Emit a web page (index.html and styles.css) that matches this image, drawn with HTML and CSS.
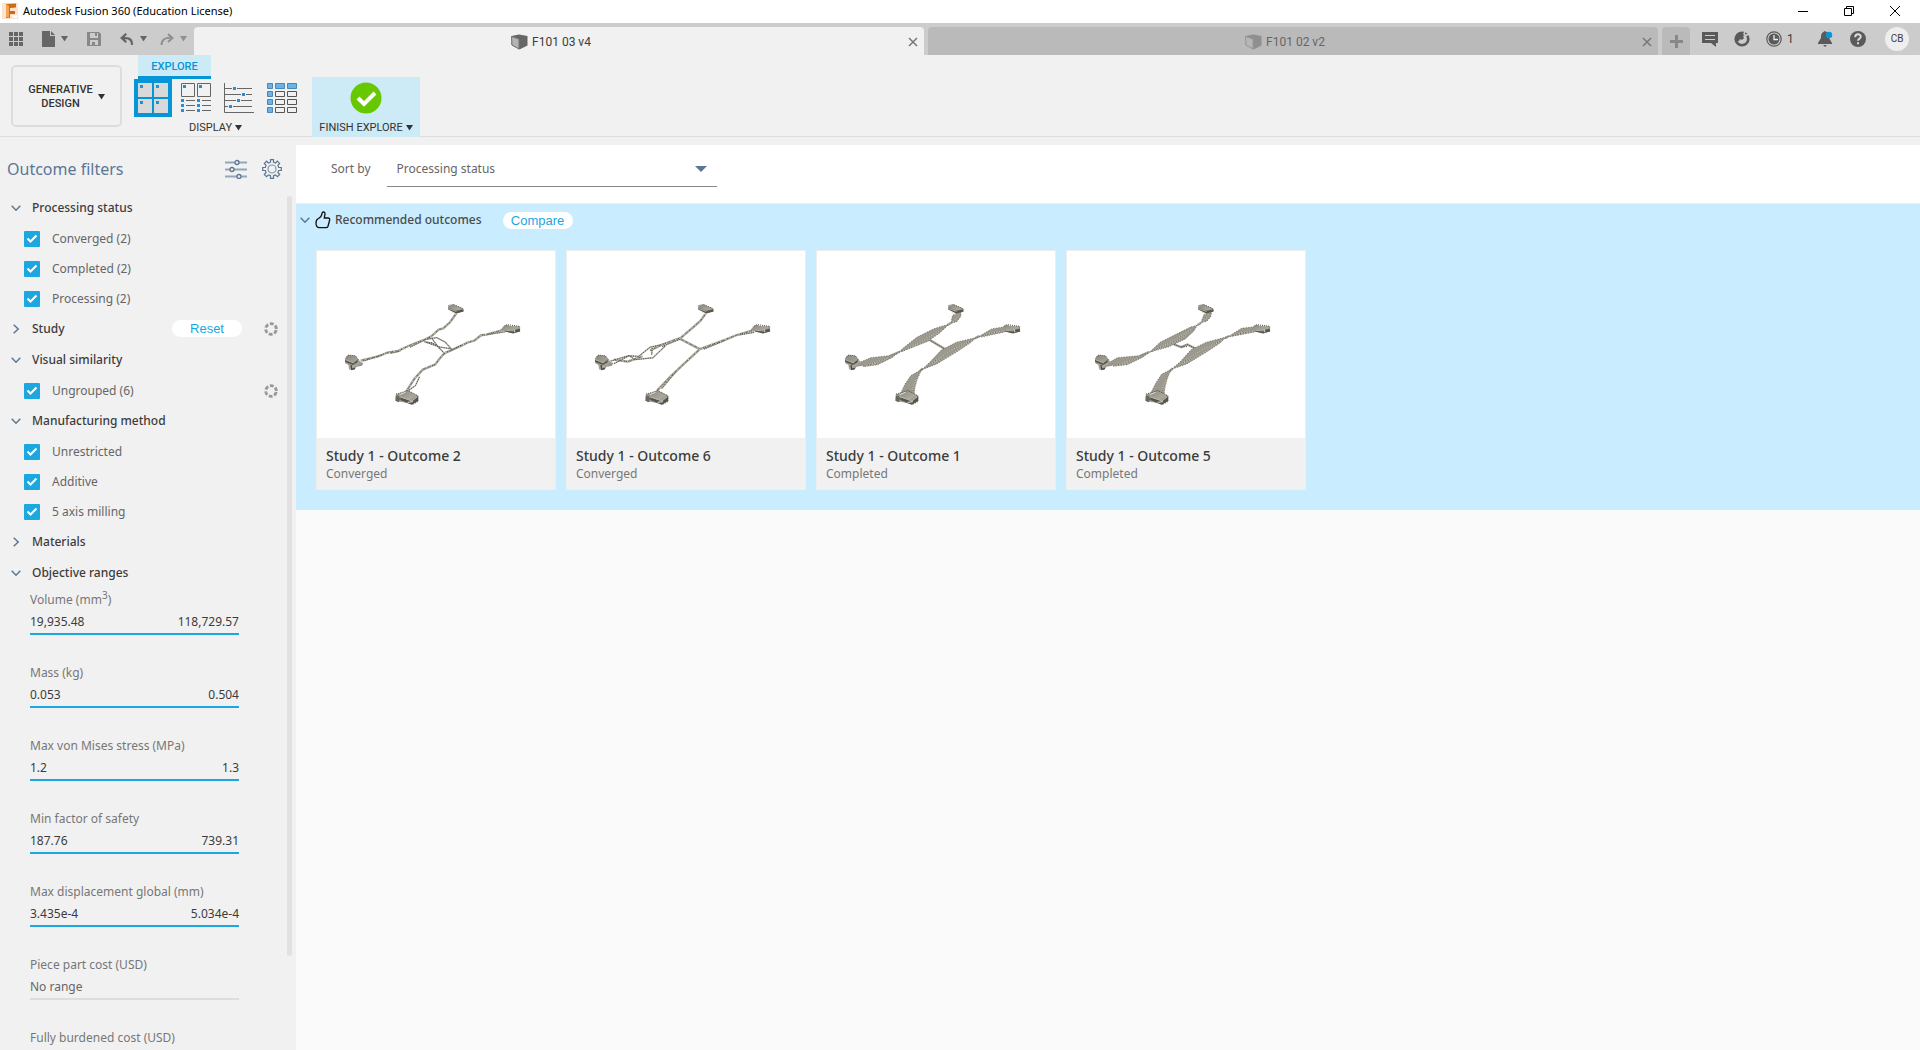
FILE: index.html
```html
<!DOCTYPE html>
<html lang="en">
<head>
<meta charset="utf-8">
<title>Autodesk Fusion 360 (Education License)</title>
<link rel="stylesheet" href="styles.css">
</head>
<body>
<svg class="defs" aria-hidden="true">
  <defs>
    <linearGradient id="metal" x1="0" y1="0" x2="1" y2="1">
      <stop offset="0" stop-color="#88857c"/><stop offset=".6" stop-color="#aaa79d"/><stop offset="1" stop-color="#77746b"/>
    </linearGradient>
    <symbol id="caret" viewBox="0 0 7 6"><path d="M0 0h7L3.500 5.500z" fill="currentColor"/></symbol>
    <symbol id="cross" viewBox="0 0 10 10"><path d="M1 1l8 8M9 1L1 9" fill="none" stroke="currentColor" stroke-width="1.500"/></symbol>
    <symbol id="chevron" viewBox="0 0 10 10"><path d="M.7 2.700L5 7.200l4.300-4.500" fill="none" stroke="#5c7694" stroke-width="1.500"/></symbol>
    <symbol id="cube" viewBox="0 0 17 16">
      <path d="M.5 2L8 .5 16.500 2v9.500L8.500 15.500.5 11z" fill="#666"/>
      <path d="M.5 2.500L8 5v10L1 11z" fill="#b4b4b4"/><path d="M.5 2.500L8 5v10L1 11z" fill="none" stroke="#777"/>
    </symbol>
    <symbol id="spinner" viewBox="0 0 14 14"><circle cx="7" cy="7" r="5.300" fill="none" stroke="#999" stroke-width="2.800" stroke-dasharray="3.800 1.750" stroke-dashoffset="-1"/></symbol>
    <symbol id="pads" viewBox="18 30 720 564">
      <g fill="url(#metal)">
        <path d="M415 196l16-5 30 13v8l-18 5-8-9-20-6z"/>
        <path d="M583 256l9-4 10 4 28 1 2 16-20 5-29-6-10-4z"/>
        <path d="M103 356l9-12 22 2 14 18 10 4-4 8-16 3-8 10-15-1-2-14-10-6z"/>
        <path d="M256 463l18-5 18-7 32 16v16l-18 10-28-6-12-2-8-2z"/>
      </g>
      <path d="M256 468l-1 14 10 5 5-12-6-8z" fill="#6a675e"/>
      <path d="M270 472v8l34 14 20-12v-14l-18 15zM103 357v7l24 10 14-8v-8l-12 10zM415 200v6l24 12 22-6v-6l-20 4zM587 268v5l24 6 20-6v-9l-18 5z" fill="#57544c"/>
      <path d="M270 470l35 13 18-14M104 358l25 10M416 203l24 9M588 269l25 2" fill="none" stroke="#b9b6ac" stroke-width="3"/>
      <path d="M121 374l2 13 10-3" fill="none" stroke="#4b4942" stroke-width="4"/>
      <path d="M292 487l16-2M614 267l3 8M268 464l18-8M426 214l12 6" fill="none" stroke="#e6e3da" stroke-width="3"/>
      <g fill="none" stroke="#4b4942" stroke-width="3" stroke-dasharray="3 3">
        <path d="M416 194l15-3 30 13M585 256l8-4 38 5v16M104 354l8-10 22 2 13 17M257 462l18-5 18-6 30 16v18l-18 9"/>
      </g>
    </symbol>
    <path id="beam-1" d="M440 217l-10 14-10 14-20 18-14 4-22 20-24 12-42 16-34 16-34 6-30 12-50 12M588 266l-58 16-16 2-20 16-20 6-24 12-46 20-16 18-12 16-38 16-24 26-26 40"/>
    <path id="beam-1b" d="M352 296l28-5 26 14 18 20-38-6-20-12-22-3 40 14 22 24M366 294l22 30M300 320l60-30M420 332l34-18M212 344l-54 18M586 274l-54 8M328 410l-12 26-28 20M242 338l28-6"/>
    <path id="beam-2" d="M438 218l-16 22-20 18-40 34-56 20-36 18M246 348l-44 16-42-6M584 268l-54 16-34 14-76 28-62-32M420 326l-50 46-40 38-40 42"/>
    <path id="beam-2b" d="M150 362l54-16 30 2 36-28 36-8M160 370l46-24 18 12 54-6 38-36M276 322l-2 22M584 275l-44 8M348 394l-44 52M360 296l-54 22M494 300l-62 26"/>
    <path id="blade-a" d="M454 209l-26 15-5 24 18-5 12-16zM414 252l-16 4-28 9-50 25-40 32-16 14 90-34 34-24 22-20zM262 338l-28 8-54 6-30 13 8 14 44-6 44-22zM586 258l-40 7-44 26 20-3 64-14zM500 291l-60 14-46 24-34 36-26 24 46-18 60-36 42-28zM334 388l-32 18-18 26-12 26 40 2 4-30z"/>
    <path id="blade-b" d="M456 211l-24 11-9 24 18-4 12-14zM412 254l-20 5-52 26-40 20-32 30 58-16 50-24 26-24zM264 338l-30 8-64 6-22 13 10 13 42-5 46-22zM586 258l-40 5-42 26 20-3 62-12zM500 289l-60 16-46 22-34 38-26 22 46-16 60-36 42-28zM332 388l-28 14-18 28-14 28 40 2 4-30z"/>
    <path id="ridge" d="M398 266l-60 34-66 34 80-32 38-30M490 298l-64 30-70 46 66-30 58-42M324 400l-22 56 14-20 6-34M584 270l-68 16 50-14M236 352l-66 22 42-6M450 218l-20 26"/>
    <path id="necks" d="M424 246l-12 8M268 334l-28 12M508 286l-12 8M338 384l-10 10"/>
  </defs>
</svg>

<header class="titlebar">
  <svg class="app-logo" viewBox="0 0 16 16"><path d="M0 0h16v16H0z" fill="#fbe3cd"/><path d="M4 1l10-.5v4l-6 .5v3h5v3H8v4H4z" fill="#cf6a13"/><path d="M4 1l3 2v12l-3-1z" fill="#f4a555"/><path d="M10 12h5v3h-4z" fill="#fff"/></svg>
  <span class="app-name">Autodesk Fusion 360 (Education License)</span>
  <div class="window-controls">
    <button aria-label="Minimize"><svg viewBox="0 0 12 12"><path d="M1 6.500h10" stroke="#000"/></svg></button>
    <button aria-label="Restore"><svg viewBox="0 0 12 12"><path d="M1.500 3.500h7v7h-7zM3.500 3.500v-2h7v7h-2" fill="none" stroke="#000"/></svg></button>
    <button aria-label="Close"><svg viewBox="0 0 12 12"><path d="M1 1l10 10M11 1L1 11" stroke="#000"/></svg></button>
  </div>
</header>

<nav class="tabbar">
  <div class="quick-tools">
    <button aria-label="Data panel"><svg width="14" height="14"><path d="M0 0h4v4H0zM5 0h4v4H5zM10 0h4v4h-4zM0 5h4v4H0zM5 5h4v4H5zM10 5h4v4h-4zM0 10h4v4H0zM5 10h4v4H5zM10 10h4v4h-4z" fill="#666"/></svg></button>
    <button aria-label="File"><svg width="13" height="16"><path d="M0 0h8v5h5v11H0zM9 0l4 4H9z" fill="#666"/></svg><svg class="caret"><use href="#caret"/></svg></button>
    <button aria-label="Save"><svg width="14" height="14"><path d="M0 0h12l2 2v12H0z" fill="#888"/><path d="M3 1h8v5H3zM3 8h8v5H3z" fill="#ccc"/><path d="M8 1h2v3H8zM5 10h3v3H5z" fill="#888"/></svg></button>
    <div class="history">
      <button aria-label="Undo"><svg width="14" height="12"><path d="M5.500 0L7 1.500 4.600 4C10.500 3.500 13.500 6.500 13 12h-2c0-4-2-6-6.200-5.800L7 8.500 5.500 10 0 5z" fill="#666"/></svg><svg class="caret"><use href="#caret"/></svg></button>
      <button aria-label="Redo" class="faded"><svg width="14" height="12"><path d="M8 1l4.500 4L8 9M12 5C5 4 1.500 7 1.500 12" fill="none" stroke="#909090" stroke-width="2"/></svg><svg class="caret"><use href="#caret"/></svg></button>
    </div>
  </div>
  <div class="tab active"><button class="tab-name"><svg class="cube"><use href="#cube"/></svg>F101 03 v4</button><button class="tab-close" aria-label="Close F101 03 v4"><svg><use href="#cross"/></svg></button></div>
  <div class="tab"><button class="tab-name"><svg class="cube"><use href="#cube"/></svg>F101 02 v2</button><button class="tab-close" aria-label="Close F101 02 v2"><svg><use href="#cross"/></svg></button></div>
  <button class="tab-add" aria-label="New tab"><svg width="13" height="13"><path d="M5 0h3v5h5v3H8v5H5V8H0V5h5z" fill="#888"/></svg></button>
  <div class="account">
    <button aria-label="Comments"><svg width="16" height="16"><path d="M0 1h16v11h-2v4l-5-4H0z" fill="#5a5a5a"/><path d="M3 4.500h10M3 8.500h10" stroke="#ccc"/></svg></button>
    <button aria-label="Extensions"><svg width="16" height="16"><circle cx="8" cy="8" r="6.300" fill="none" stroke="#5a5a5a" stroke-width="2.600"/><path d="M3 3l3-2 4 .5 1 2.500-2 1 1 2-2 2-2-1-1 2-3 1z" fill="#5a5a5a"/><path d="M11 0l-1 3 2 1.500L14.500 3" fill="none" stroke="#ccc" stroke-width="1.500"/></svg></button>
    <button class="jobs" aria-label="Job status"><svg width="16" height="16"><circle cx="8" cy="8" r="7.200" fill="none" stroke="#5a5a5a" stroke-width="1.200"/><circle cx="8" cy="8" r="5.500" fill="#5a5a5a"/><path d="M8 4v4.500h4" fill="none" stroke="#eee" stroke-width="1.300"/></svg><span>1</span></button>
    <button class="bell" aria-label="Notifications"><svg width="16" height="16"><path d="M7 0c4 2 4 4 4 7l3 5v1H0v-1l3-5c0-3 0-5 4-7zM5 14h4l-2 2z" fill="#5a5a5a"/><circle cx="11" cy="4" r="3.200" fill="#0696d7"/></svg></button>
    <button aria-label="Help"><svg width="16" height="16"><circle cx="8" cy="8" r="8" fill="#5a5a5a"/><path d="M5.200 6.200c0-4 5.800-3.700 5.600-.4C10.700 7.600 8 7.700 8 9.800M8 11.300v2" fill="none" stroke="#ddd" stroke-width="1.900"/></svg></button>
    <button class="avatar">CB</button>
  </div>
</nav>

<section class="ribbon">
  <button class="workspace"><span>GENERATIVE<br>DESIGN</span><svg class="caret"><use href="#caret"/></svg></button>
  <div class="display-group">
    <button class="ribbon-tab">EXPLORE</button>
    <div class="views">
      <button class="view selected" aria-label="Thumbnail view"><svg viewBox="0 0 114 114"><path d="M0 0h114v114H0z" fill="#0696d7"/><path d="M12 12h42v42H12zM60 12h42v42H60zM12 60h42v42H12zM60 60h42v42H60z" fill="#d9d9d9"/><path d="M18 18h9v9h-9zM66 18h9v9h-9zM18 66h9v9h-9zM66 66h9v9h-9z" fill="#1e90e0"/></svg></button>
      <button class="view" aria-label="Properties view"><svg viewBox="0 0 90 90"><path d="M1.500 1.500h39v39h-39zM49.500 1.500h39v39h-39z" fill="none" stroke="#666" stroke-width="3"/><path d="M6 6h9v9H6zM54 6h9v9h-9zM0 48h9v9H0zM48 48h9v9h-9zM0 63h9v9H0zM48 63h9v9h-9zM0 78h9v9H0zM48 78h9v9h-9z" fill="#1e90e0"/><path d="M15 52.500h27M63 52.500h27M15 67.500h27M63 67.500h27M15 82.500h27M63 82.500h27" stroke="#666" stroke-width="3"/></svg></button>
      <button class="view" aria-label="Scatter plot view"><svg viewBox="0 0 90 90"><path d="M1.500 0v88.500H90M3 16.500h81M3 34.500h81M3 52.500h81M3 70.500h81" fill="none" stroke="#666" stroke-width="3"/><path d="M24 10h15v13H24zM51 28h15v13H51zM36 46h15v13H36zM12 64h15v13H12z" fill="#f1f1f1"/><path d="M27 12h9v9h-9zM54 30h9v9h-9zM39 48h9v9h-9zM15 66h9v9h-9z" fill="#1e90e0"/></svg></button>
      <button class="view" aria-label="Table view"><svg viewBox="0 0 90 90"><path d="M1.500 1.500h15v15h-15zM25.500 1.500h27v15h-27zM61.500 1.500h27v15h-27zM1.500 25.500h15v15h-15zM1.500 49.500h15v15h-15zM1.500 73.500h15v15h-15z" fill="#69b3e7" stroke="#4a86b8" stroke-width="3"/><path d="M25.500 25.500h27v15h-27zM61.500 25.500h27v15h-27zM25.500 49.500h27v15h-27zM61.500 49.500h27v15h-27zM25.500 73.500h27v15h-27zM61.500 73.500h27v15h-27z" fill="none" stroke="#555" stroke-width="3"/></svg></button>
    </div>
    <button class="ribbon-label">DISPLAY<svg class="caret"><use href="#caret"/></svg></button>
  </div>
  <button class="finish">
    <svg class="finish-icon" viewBox="0 0 32 32"><circle cx="16" cy="16" r="15.500" fill="#67c800"/><path d="M8 16l6 6L25 11" fill="none" stroke="#fff" stroke-width="4"/></svg>
    <span class="ribbon-label">FINISH EXPLORE<svg class="caret"><use href="#caret"/></svg></span>
  </button>
</section>

<div class="workarea">
  <aside class="sidebar">
    <div class="filters-header">
      <h1>Outcome filters</h1>
      <button aria-label="Filter options"><svg width="22" height="20"><path d="M0 3.500h22M0 10.500h22M0 17.500h22" stroke="#93a7ba" stroke-width="2"/><g fill="#f1f1f1" stroke="#5c7694" stroke-width="1.300"><circle cx="12" cy="3.500" r="2"/><circle cx="7" cy="10.500" r="2"/><circle cx="14" cy="17.500" r="2"/></g></svg></button>
      <button aria-label="Settings"><svg width="20" height="20" viewBox="0 0 20 20"><path d="M8.500.7h3v2.500l2 .8 1.800-1.800 2.300 2.300L15.900 6.400l.8 2.100h2.600v3h-2.600l-.8 2 1.800 1.900-2.300 2.300-1.900-1.800-2 .8v2.600h-3v-2.600l-2-.8-1.900 1.800-2.300-2.300 1.800-1.900-.8-2H.7v-3h2.600l.8-2.100L2.300 4.500l2.300-2.300L6.500 4l2-.8z" fill="none" stroke="#5c7694" stroke-width="1.200"/><circle cx="10" cy="10" r="4" fill="none" stroke="#8296aa" stroke-width="1.200"/></svg></button>
    </div>
    <div class="filters-body">
      <div class="filters">
        <h2><svg class="chevron"><use href="#chevron"/></svg>Processing status</h2>
        <label class="option"><input type="checkbox" checked>Converged (2)</label>
        <label class="option"><input type="checkbox" checked>Completed (2)</label>
        <label class="option"><input type="checkbox" checked>Processing (2)</label>
        <h2><svg class="chevron closed"><use href="#chevron"/></svg>Study<button class="pill">Reset</button><svg class="spinner"><use href="#spinner"/></svg></h2>
        <h2><svg class="chevron"><use href="#chevron"/></svg>Visual similarity</h2>
        <label class="option"><input type="checkbox" checked>Ungrouped (6)<svg class="spinner"><use href="#spinner"/></svg></label>
        <h2><svg class="chevron"><use href="#chevron"/></svg>Manufacturing method</h2>
        <label class="option"><input type="checkbox" checked>Unrestricted</label>
        <label class="option"><input type="checkbox" checked>Additive</label>
        <label class="option"><input type="checkbox" checked>5 axis milling</label>
        <h2><svg class="chevron closed"><use href="#chevron"/></svg>Materials</h2>
        <h2><svg class="chevron"><use href="#chevron"/></svg>Objective ranges</h2>
        <div class="range"><h3>Volume (mm<sup>3</sup>)</h3><p><span>19,935.48</span><span>118,729.57</span></p></div>
        <div class="range"><h3>Mass (kg)</h3><p><span>0.053</span><span>0.504</span></p></div>
        <div class="range"><h3>Max von Mises stress (MPa)</h3><p><span>1.2</span><span>1.3</span></p></div>
        <div class="range"><h3>Min factor of safety</h3><p><span>187.76</span><span>739.31</span></p></div>
        <div class="range"><h3>Max displacement global (mm)</h3><p><span>3.435e-4</span><span>5.034e-4</span></p></div>
        <div class="range none"><h3>Piece part cost (USD)</h3><p><span>No range</span></p></div>
        <div class="range none"><h3>Fully burdened cost (USD)</h3></div>
      </div>
      <div class="scroll-thumb"></div>
    </div>
  </aside>

  <main class="results">
    <div class="sortbar">
      <label for="sort">Sort by</label>
      <select id="sort"><option>Processing status</option><option>Volume</option><option>Mass</option></select>
    </div>
    <section class="recommended">
      <div class="group-header">
        <svg class="chevron"><use href="#chevron"/></svg>
        <svg class="thumb-up" viewBox="0 0 16 18"><path d="M8.500 1c1 0 1.800.8 1.500 2L9.300 7H13c1.500 0 2 1 1.600 2.300L13 15.200c-.3 1-1 1.500-2.200 1.500H4.500C2 16.700 1 14.500 1 12s.8-3.800 2.500-4.500C5.500 6.500 6.800 4.500 7 2.500 7.100 1.500 7.600 1 8.500 1z" fill="none" stroke="#111" stroke-width="1.300"/></svg>
        <h2>Recommended outcomes</h2>
        <button class="pill">Compare</button>
      </div>
      <div class="cards">
        <article class="card">
          <svg class="model" viewBox="18 30 720 564"><use class="strut" href="#beam-1"/><use class="strand" href="#beam-1b"/><use class="dark" href="#beam-1"/><use class="light" href="#beam-1"/><use class="dark" href="#beam-1b"/><use href="#pads" x="18" y="30" width="720" height="564"/></svg>
          <div class="caption"><h3>Study 1 - Outcome 2</h3><p>Converged</p></div>
        </article>
        <article class="card">
          <svg class="model" viewBox="18 30 720 564"><use class="strut" href="#beam-2"/><use class="strand" href="#beam-2b"/><use class="dark" href="#beam-2"/><use class="light" href="#beam-2"/><use class="dark" href="#beam-2b"/><use href="#pads" x="18" y="30" width="720" height="564"/></svg>
          <div class="caption"><h3>Study 1 - Outcome 6</h3><p>Converged</p></div>
        </article>
        <article class="card">
          <svg class="model" viewBox="18 30 720 564"><path class="strut" d="M358 298l48 28"/><path class="dark" d="M358 298l48 28"/><use class="strut" href="#necks"/><use class="blade" href="#blade-a"/><use class="edge" href="#blade-a"/><use class="shine" href="#ridge"/><use class="edge" href="#ridge"/><use href="#pads" x="18" y="30" width="720" height="564"/></svg>
          <div class="caption"><h3>Study 1 - Outcome 1</h3><p>Completed</p></div>
        </article>
        <article class="card">
          <svg class="model" viewBox="18 30 720 564"><path class="strut" d="M342 312l22 8 18-8 28 14"/><path class="dark" d="M342 312l22 8 18-8 28 14M364 320l20-2"/><use class="strut" href="#necks"/><use class="blade" href="#blade-b"/><use class="edge" href="#blade-b"/><use class="shine" href="#ridge"/><use class="edge" href="#ridge"/><use href="#pads" x="18" y="30" width="720" height="564"/></svg>
          <div class="caption"><h3>Study 1 - Outcome 5</h3><p>Completed</p></div>
        </article>
      </div>
    </section>
  </main>
</div>
</body>
</html>
```
FILE: styles.css
```css
* { box-sizing: border-box; }
body {
  margin: 0;
  height: 100vh;
  display: flex;
  flex-direction: column;
  overflow: hidden;
  background: #f1f1f1;
  color: #3c3c3c;
  font: 12px/20px "Noto Sans", sans-serif;
}
h1, h2, h3, p { margin: 0; font-weight: 400; }
svg { display: block; flex: none; }
button {
  display: flex;
  align-items: center;
  padding: 0;
  border: 0;
  background: none;
  color: inherit;
  font: inherit;
}
.defs { position: absolute; width: 0; height: 0; }
.caret { width: 7px; height: 6px; }

/* Title bar */
.titlebar {
  display: flex;
  align-items: center;
  height: 23px;
  padding: 0 19px 1px 2px;
  background: #fff;
  color: #000;
  font: 11px/20px "Noto Sans", sans-serif;
}
.app-logo { width: 16px; height: 16px; margin-right: 5px; }
.window-controls { display: flex; gap: 34px; margin-left: auto; }
.window-controls svg { width: 12px; height: 12px; }

/* Document tabs */
.tabbar {
  display: flex;
  gap: 4px;
  height: 32px;
  padding-top: 4px;
  background: #ccc;
  font: 12px/20px Roboto, sans-serif;
}
.quick-tools {
  display: flex;
  align-items: center;
  gap: 19px;
  width: 190px;
  padding: 0 0 4px 9px;
  color: #666;
}
.quick-tools button { gap: 6px; }
.history { display: flex; gap: 13px; }
.faded { color: #909090; }
.tab {
  flex: 1;
  display: flex;
  background: #bababa;
  border-radius: 4px 4px 0 0;
  padding: 1px 6px 0 0;
  color: #666;
}
.tab.active { background: #f1f1f1; color: #3c3c3c; }
.tab-name { flex: 1; justify-content: center; gap: 4px; }
.cube { width: 17px; height: 16px; }
.tab:not(.active) .cube { opacity: .5; }
.tab-close svg { width: 10px; height: 10px; color: #777; }
.tab-add {
  justify-content: center;
  width: 28px;
  background: #bababa;
  border-radius: 4px 4px 0 0;
}
.account {
  display: flex;
  align-items: center;
  gap: 16px;
  width: 226px;
  padding: 0 11px 4px 8px;
}
.jobs { gap: 5px; margin-right: 8px; }
.avatar {
  justify-content: center;
  width: 24px;
  height: 24px;
  margin-left: auto;
  border-radius: 50%;
  background: #eee;
  font-size: 10px;
}

/* Ribbon */
.ribbon {
  display: flex;
  height: 82px;
  padding-left: 11px;
  border-bottom: 1px solid #ddd;
  color: #333;
  font: 11px/14px Roboto, sans-serif;
}
.workspace {
  justify-content: center;
  gap: 5px;
  width: 111px;
  height: 62px;
  margin: 10px 12px 0 0;
  padding-top: 2px;
  border: 2px solid #ddd;
  border-radius: 5px;
  font-weight: 500;
  text-align: center;
}
.display-group { width: 163px; margin-right: 15px; }
.ribbon-tab {
  justify-content: center;
  width: 73px;
  height: 24px;
  margin-left: 4px;
  padding-top: 2px;
  background: #cdeaf7;
  border-bottom: 3px solid #0696d7;
  color: #0696d7;
  font-weight: 500;
}
.views {
  display: flex;
  align-items: center;
  justify-content: space-between;
}
.view svg { width: 30px; height: 30px; }
.view.selected { margin-right: -4px; }
.view.selected svg { width: 38px; height: 38px; }
.ribbon-label {
  display: flex;
  align-items: center;
  justify-content: center;
  gap: 3px;
  width: 100%;
}
.display-group .ribbon-label { height: 22px; }
.finish {
  flex-direction: column;
  width: 108px;
  height: 60px;
  margin-top: 22px;
  padding-top: 5px;
  background: #cdeaf7;
}
.finish-icon { width: 32px; height: 32px; }
.finish .ribbon-label { height: 20px; margin-top: 4px; }

/* Filters */
.workarea { flex: 1; display: flex; min-height: 0; }
.sidebar {
  display: flex;
  flex-direction: column;
  width: 296px;
  padding-right: 4px;
}
.filters-header {
  display: flex;
  align-items: center;
  gap: 15px;
  height: 59px;
  padding: 5px 10px 0 7px;
}
.filters-header h1 {
  flex: 1;
  color: #5c7694;
  font-size: 16px;
}
.filters-body { flex: 1; display: flex; min-height: 0; }
.filters {
  flex: 1;
  min-width: 0;
  overflow: hidden;
  padding: 0 9px 0 11px;
  margin-top: -4px;
}
.scroll-thumb {
  width: 5px;
  height: 89%;
  border-radius: 3px;
  background: #e1e1e1;
}
.filters h2 {
  display: flex;
  align-items: center;
  height: 31px;
  font-size: 12px;
  font-weight: 500;
}
.chevron { width: 10px; height: 10px; }
.chevron.closed { transform: rotate(-90deg); }
.filters .chevron { margin-right: 11px; }
.option {
  display: flex;
  align-items: center;
  height: 30px;
  padding: 1px 0 0 13px;
  color: #666;
}
.option input {
  appearance: none;
  width: 16px;
  height: 16px;
  margin: 0 12px 0 0;
  border-radius: 1px;
  background: #1ca7e0 url("data:image/svg+xml,%3Csvg xmlns='http://www.w3.org/2000/svg' viewBox='0 0 16 16'%3E%3Cpath d='M3.500 7.500l3 3 6-6' fill='none' stroke='white' stroke-width='2'/%3E%3C/svg%3E");
}
.spinner { width: 14px; height: 14px; margin-left: auto; }
.pill {
  justify-content: center;
  width: 70px;
  height: 17px;
  border-radius: 9px;
  background: #fff;
  color: #1ca7e0;
  font: 13px/17px "Liberation Sans", sans-serif;
}
.filters .pill { margin-left: auto; }
.filters .pill + .spinner { margin-left: 22px; }
.range { width: 209px; margin: 0 0 26px 19px; }
.range h3 { height: 24px; color: #777; font-size: 12px; line-height: 24px; }
.range sup { font-size: 10px; line-height: 0; }
.range p {
  display: flex;
  justify-content: space-between;
  height: 23px;
  border-bottom: 2px solid #1ca7e0;
}
.range.none p { border-color: #ddd; color: #666; }

/* Results */
.results { flex: 1; min-width: 0; padding-top: 8px; background: linear-gradient(#f1f1f1 8px, #fafafa 8px); }
.sortbar {
  display: flex;
  align-items: center;
  gap: 16px;
  height: 59px;
  padding: 0 35px 10px;
  background: #fff;
  border-bottom: 1px solid #eee;
  color: #666;
}
.sortbar select {
  appearance: none;
  width: 330px;
  height: 35px;
  padding: 0 10px;
  border: 0;
  border-bottom: 1px solid #888;
  border-radius: 0;
  background: url("data:image/svg+xml,%3Csvg xmlns='http://www.w3.org/2000/svg' width='12' height='6'%3E%3Cpath d='M0 0h12L6 6z' fill='%235c7694'/%3E%3C/svg%3E") no-repeat right 10px center;
  color: #666;
  font: inherit;
}
.recommended { padding-bottom: 20px; background: #c9ecff; }
.group-header {
  display: flex;
  align-items: center;
  height: 32px;
  padding-left: 4px;
}
.thumb-up { width: 16px; height: 18px; margin: 0 4px 0 5px; }
.group-header h2 { color: #4a4a4a; font-size: 12px; font-weight: 500; }
.group-header .pill { margin-left: 21px; }
.cards { display: flex; flex-wrap: wrap; gap: 10px; padding: 14px 20px 0; }
.card { width: 240px; background: #fff; border: 1px solid #eee; }
.model { width: 100%; height: 187px; }
.caption { height: 51px; padding: 8px 9px; background: #f1f1f1; }
.caption h3 { font-size: 14px; font-weight: 500; line-height: 19px; }
.caption p { color: #777; line-height: 17px; }

/* Model drawings */
.strut, .strand, .dark, .light, .shine, .edge { fill: none; stroke-linejoin: round; }
.strut { stroke: #a3a096; stroke-width: 7; }
.strand { stroke: #aaa79d; stroke-width: 4; }
.dark { stroke: #4b4942; stroke-width: 3; stroke-dasharray: 3 4; }
.edge { stroke: #5b584f; stroke-width: 2; stroke-dasharray: 4 4; }
.light { stroke: #dedbd2; stroke-width: 3; stroke-dasharray: 4 11; }
.shine { stroke: #c6c3b9; stroke-width: 3; }
.blade { fill: #9c998f; }
```
